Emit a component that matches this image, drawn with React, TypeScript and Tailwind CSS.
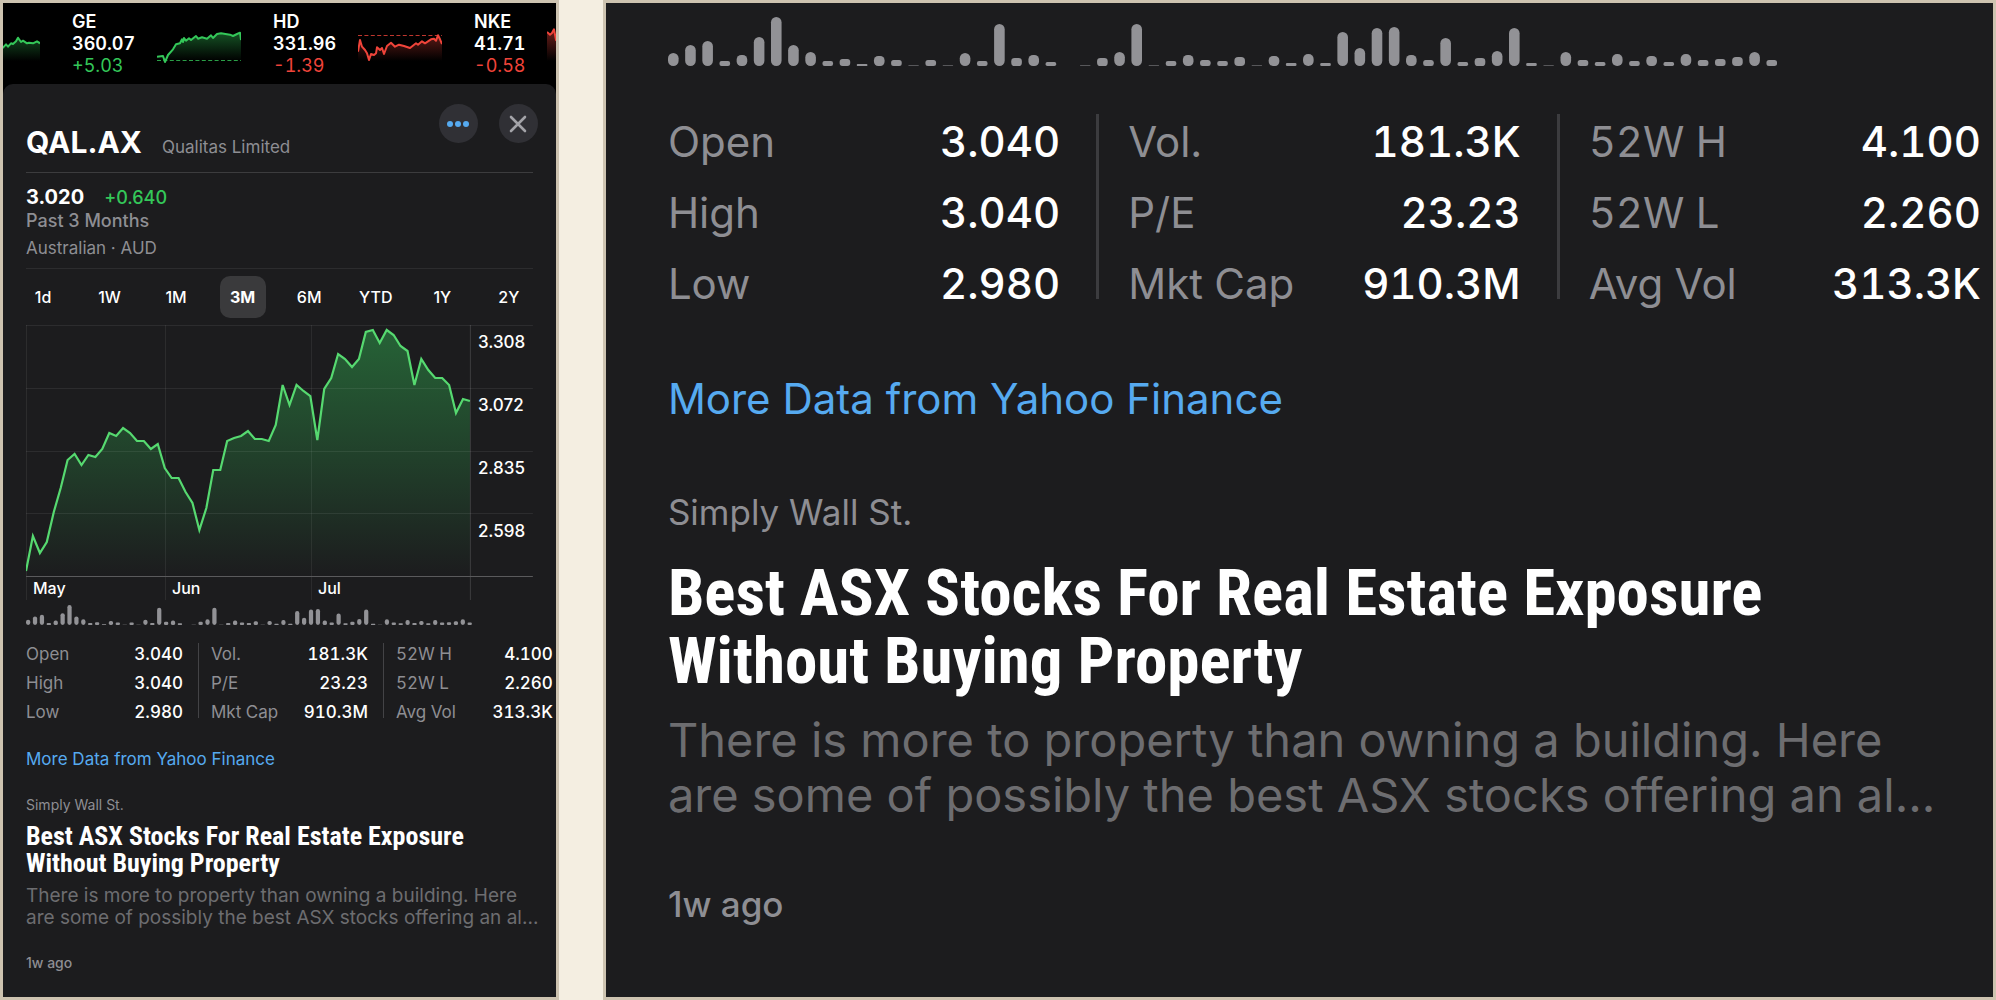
const quotes = [
  {
    name: "GE",
    price: "360.07",
    change: "+5.03",
    up: true,
    base: 36,
    points:
      "0,32.7 6,32 8,38 11,31 16,25.3 19,20.3 23,19.3 25,15.3 26,18 27,14 29,16.7 32,14.3 34,16 39,12 41,14.7 45,13.3 50,14.7 54,11.3 56,14 60,10 64,9.3 73,10.7 76,12 80,10 83,8.7 84,16",
  },
  {
    name: "HD",
    price: "331.96",
    change: "-1.39",
    up: false,
    base: 11,
    points:
      "0,27.7 2,16 4,22.7 7,26 9,29.3 11,36 13,30 16,31 18,29.3 19,23.3 22,26 24,24 26,30 29,22 33,18.7 37,22.7 41,20.7 46,22 52,24 58,19.3 60,20.7 64,17.3 67,19.3 73,15.3 76,14.7 78,16.7 80,11.3 82,15.3 84,20",
  },
  {
    name: "NKE",
    price: "41.71",
    change: "-0.58",
    up: false,
    points: "0,8 3,10.7 5,9 7,5.3 9,16 14,20 22,18 30,24 41,22 52,27 63,25 74,29 84,27",
  },
];

const ranges = ["1d", "1W", "1M", "3M", "6M", "YTD", "1Y", "2Y"];
const months = ["May", "Jun", "Jul"];
const levels = ["3.308", "3.072", "2.835", "2.598"];

// distance of each close from the top of the plot
const closes = [
  246, 211, 228, 217, 187, 163, 135, 129, 140, 130, 132, 124, 108, 111, 103, 108, 116, 116, 124, 119, 143, 153, 153,
  167, 178, 205, 183, 145, 145, 116, 113, 111, 106, 114, 114, 116, 100, 60, 80, 60, 66, 71, 115, 64, 53, 29, 34, 42,
  34, 7, 5, 18, 5, 10, 21, 26, 60, 34, 45, 53, 53, 60, 88, 74, 76,
];

const volumes = [
  13, 21, 25, 5, 11, 29, 49, 21, 14, 5, 7, 2, 10, 6, 1, 6, 1, 13, 5, 42, 8, 11, 4, 0, 1, 8, 14, 42, 1, 5, 11, 6, 5, 9,
  1, 10, 3, 12, 3, 34, 18, 38, 39, 11, 6, 28, 4, 8, 15, 38, 3, 1, 14, 6, 4, 12, 5, 10, 4, 12, 6, 7, 9, 14, 6,
];

const stats = [
  [
    ["Open", "3.040"],
    ["High", "3.040"],
    ["Low", "2.980"],
  ],
  [
    ["Vol.", "181.3K"],
    ["P/E", "23.23"],
    ["Mkt Cap", "910.3M"],
  ],
  [
    ["52W H", "4.100"],
    ["52W L", "2.260"],
    ["Avg Vol", "313.3K"],
  ],
];

function Spark({ id, points, up, base }: { id: string; points: string; up: boolean; base?: number }) {
  const color = up ? "#34c759" : "#f0443a";
  return (
    <svg className="h-10 w-[84px] shrink-0" viewBox="0 0 84 40" aria-hidden="true">
      <defs>
        <linearGradient id={id} gradientUnits="userSpaceOnUse" x1="0" y1="6" x2="0" y2="37">
          <stop offset="0" stopColor={color} stopOpacity="0.45" />
          <stop offset="1" stopColor={color} stopOpacity="0" />
        </linearGradient>
      </defs>
      <polygon points={`0,37 ${points} 84,37`} fill={`url(#${id})`} />
      {base !== undefined && (
        <path d={`M0 ${base + 0.5}H84`} stroke={color} strokeOpacity="0.8" strokeWidth="1.2" strokeDasharray="4 2.4" />
      )}
      <polyline points={points} fill="none" stroke={color} strokeWidth="2" strokeLinejoin="round" />
    </svg>
  );
}

function Ticker() {
  return (
    <div className="flex items-center overflow-hidden bg-black pt-2 pb-[7px] text-lg leading-[22px] tabular-nums">
      <div className="-ml-[47px] mr-8 flex shrink-0">
        <Spark
          id="spark-prev"
          up
          points="0,26 12,25 24,27 36,24 47,23.7 50,20.3 52,22.7 55,19.3 57,20 60,17.3 62,13.7 65,18 67,16.7 71,19.3 73,18.7 77,19.3 81,17.3 84,19.3"
        />
      </div>
      {quotes.map((q) => (
        <div key={q.name} className="mr-8 flex shrink-0 items-center">
          <div className={q.name === "NKE" ? "w-[73px]" : "w-[85px]"}>
            <p className="font-semibold text-white">{q.name}</p>
            <p className="font-semibold text-white">{q.price}</p>
            <p className={q.up ? "text-[#34c759]" : "text-[#f0443a]"}>{q.change}</p>
          </div>
          <Spark id={`spark-${q.name}`} points={q.points} up={q.up} base={q.base} />
        </div>
      ))}
    </div>
  );
}

function PriceChart() {
  const line = closes.map((y, i) => `${((i * 444) / 64).toFixed(1)},${y}`).join(" ");
  return (
    <div className="relative mt-[7px] h-[275px] font-medium text-white">
      <svg className="h-full w-full" viewBox="0 0 507 275" preserveAspectRatio="none" role="img" aria-label="Price, past 3 months">
        <defs>
          <linearGradient id="price-fill" gradientUnits="userSpaceOnUse" x1="0" y1="0" x2="0" y2="251">
            <stop offset="0" stopColor="#34c759" stopOpacity="0.42" />
            <stop offset="0.55" stopColor="#34c759" stopOpacity="0.2" />
            <stop offset="1" stopColor="#34c759" stopOpacity="0" />
          </linearGradient>
        </defs>
        <polygon points={`0,251 ${line} 444,251`} fill="url(#price-fill)" />
        <path
          d="M0 0.5H507M0 63.5H507M0 126.5H507M0 188.5H507M0.5 0V275M139.5 0V275M285.5 0V275"
          stroke="#fff"
          strokeOpacity="0.08"
        />
        <path d="M444.5 0V275" stroke="#fff" strokeOpacity="0.15" />
        <path d="M0 251.5H507" stroke="#5a5a5c" />
        <polyline points={line} fill="none" stroke="#56d970" strokeWidth="2.2" strokeLinejoin="miter" />
      </svg>
      <div className="absolute top-0 right-0 flex w-[55px] flex-col text-[17px] leading-[35px]">
        {levels.map((l) => (
          <span key={l} className="h-[63px]">
            {l}
          </span>
        ))}
      </div>
      <div className="absolute right-0 bottom-0 left-0 grid grid-cols-[139fr_146fr_222fr] text-base leading-6">
        {months.map((m) => (
          <span key={m} className="pl-[7px]">
            {m}
          </span>
        ))}
      </div>
    </div>
  );
}

function VolumeBars({ className }: { className: string }) {
  return (
    <svg className={className} viewBox="0 0 1110 49" preserveAspectRatio="none" role="img" aria-label="Volume">
      {volumes.map((h, i) => (
        <rect
          key={i}
          x={i * 17.17}
          y={49 - h}
          width="10.6"
          height={h}
          rx={Math.min(5.3, h / 2.4)}
          fill="#929296"
          fillOpacity={h === 1 ? 0.5 : 1}
        />
      ))}
    </svg>
  );
}

function Stats({ large = false }: { large?: boolean }) {
  return (
    <div
      className={
        large
          ? "mt-10 flex text-[42px] leading-[71px] tabular-nums"
          : "-mr-5 mt-[15px] flex text-[17px] leading-[29px] tabular-nums"
      }
    >
      {stats.map((group, i) => (
        <div key={i} className="contents">
          {i > 0 && (
            <div
              className={
                large
                  ? "mt-2 mr-[29px] mb-5 ml-9 w-[3px] bg-[#3c3c3f]"
                  : "mt-[3px] mr-3 mb-[9px] ml-[15px] w-px bg-[#434346]"
              }
            />
          )}
          <dl className="flex-1">
            {group.map(([label, value]) => (
              <div key={label} className="flex justify-between whitespace-nowrap">
                <dt className="text-[#8e8e93]">{label}</dt>
                <dd className="font-medium text-white">{value}</dd>
              </div>
            ))}
          </dl>
        </div>
      ))}
    </div>
  );
}

function Sheet() {
  return (
    <section className="flex-1 rounded-t-[10px] bg-[#1c1c1e] px-[23px] pt-5">
      <header className="flex items-start justify-between border-b border-[#3c3c3e]">
        <div className="flex items-baseline gap-5 pt-5 pb-3">
          <h1 className="text-3xl leading-9 font-bold text-white">QAL.AX</h1>
          <p className="text-[17px] leading-6 text-[#8e8e93]">Qualitas Limited</p>
        </div>
        <div className="-mr-[5px] flex gap-[21px]">
          <button aria-label="More" className="flex size-[39px] items-center justify-center rounded-full bg-[#303035]">
            <svg width="24" height="8" viewBox="0 0 24 8" fill="#56aaf0">
              <circle cx="4" cy="4" r="3" />
              <circle cx="12" cy="4" r="3" />
              <circle cx="20" cy="4" r="3" />
            </svg>
          </button>
          <button aria-label="Close" className="flex size-[39px] items-center justify-center rounded-full bg-[#303035]">
            <svg width="18" height="18" viewBox="0 0 18 18" stroke="#a3a3a8" strokeWidth="2.6" strokeLinecap="round">
              <path d="M2 2L16 16M16 2L2 16" />
            </svg>
          </button>
        </div>
      </header>

      <div className="border-b border-[#2c2c2e] pt-3 pb-2 text-[#8e8e93]">
        <p className="flex items-baseline gap-5 leading-6">
          <span className="text-xl leading-6 font-bold text-white">3.020</span>
          <span className="text-lg leading-6 font-medium text-[#34c759]">+0.640</span>
        </p>
        <p className="text-lg leading-[22px] font-medium">Past 3 Months</p>
        <p className="mt-1 text-[17px] leading-6">Australian · AUD</p>
      </div>

      <nav className="-ml-1.5 mr-px mt-[7px] flex justify-between text-base font-medium text-white">
        {ranges.map((r) => (
          <button
            key={r}
            className={r === "3M" ? "h-[42px] w-[46px] rounded-[10px] bg-[#3a3a3c] font-bold" : "h-[42px] w-[46px]"}
          >
            {r}
          </button>
        ))}
      </nav>

      <PriceChart />
      <VolumeBars className="mt-[5px] h-5 w-[88%]" />
      <Stats />

      <a href="#" className="mt-5 block text-[17px] leading-6 text-[#56aaf0]">
        More Data from Yahoo Finance
      </a>

      <article className="mt-6 whitespace-nowrap">
        <p className="text-sm leading-5 text-[#8e8e93]">Simply Wall St.</p>
        <h2 className="mt-2 font-['Roboto_Condensed',Roboto,sans-serif] text-[26px] leading-[27px] font-bold text-white">
          Best ASX Stocks For Real Estate Exposure
          <br />
          Without Buying Property
        </h2>
        <p className="mt-2 text-[19px] leading-[22px] text-[#6d6d70]">
          There is more to property than owning a building. Here
          <br />
          are some of possibly the best ASX stocks offering an al...
        </p>
        <p className="mt-6 text-sm leading-5 font-medium text-[#8e8e93]">1w ago</p>
      </article>
    </section>
  );
}

export default function App() {
  return (
    <div className="flex min-h-screen gap-11 bg-[#f4eee1] font-[Inter,sans-serif]">
      <div className="flex w-[28%] shrink-0 flex-col overflow-hidden border-3 border-[#cdc3b0] bg-black">
        <Ticker />
        <Sheet />
      </div>

      <main className="min-w-0 flex-1 overflow-hidden border-3 border-[#cdc3b0] bg-[#1c1c1e] pt-3.5 pr-3 pl-[62px]">
        <VolumeBars className="h-[49px] w-[84.5%]" />
        <Stats large />

        <a href="#" className="mt-14 block text-[42px] leading-12 text-[#56aaf0]">
          More Data from Yahoo Finance
        </a>

        <article className="mt-[69px] whitespace-nowrap">
          <p className="text-[35px] leading-10 text-[#8e8e93]">Simply Wall St.</p>
          <h2 className="mt-[27px] font-['Roboto_Condensed',Roboto,sans-serif] text-[65px] leading-[68px] font-bold text-white">
            Best ASX Stocks For Real Estate Exposure
            <br />
            Without Buying Property
          </h2>
          <p className="mt-[17px] text-[47px] leading-[55px] text-[#6d6d70]">
            There is more to property than owning a building. Here
            <br />
            are some of possibly the best ASX stocks offering an al...
          </p>
          <p className="mt-[62px] text-[35px] leading-10 font-medium text-[#8e8e93]">1w ago</p>
        </article>
      </main>
    </div>
  );
}
